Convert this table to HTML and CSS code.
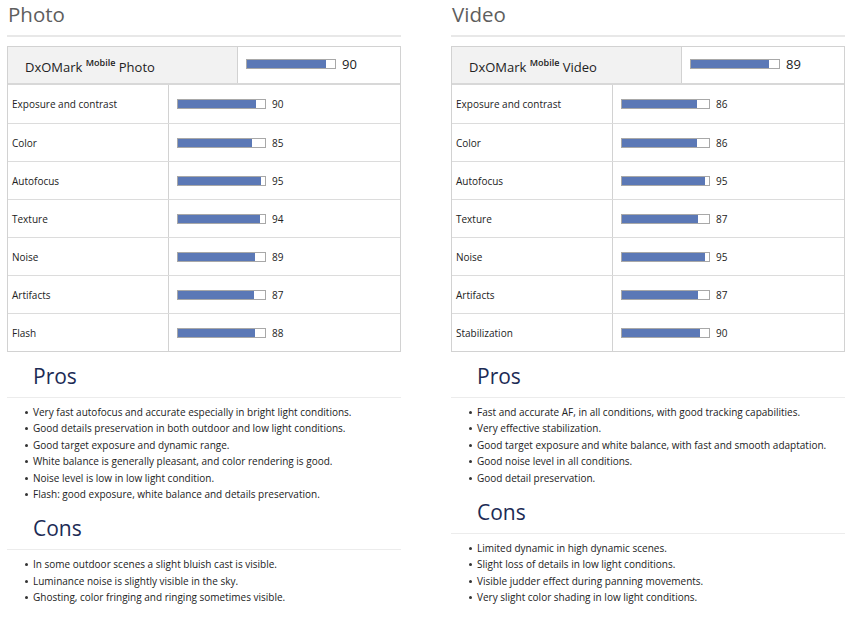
FILE: index.html
```html
<!DOCTYPE html>
<html>
<head>
<meta charset="utf-8">
<link rel="stylesheet" href="styles.css">
</head>
<body>
<div class="page">
  <section class="col">
    <h2 class="title">Photo</h2>
    <div class="score">
      <div class="score-head">
        <div class="head-label">DxOMark <sup>Mobile</sup> Photo</div>
        <div class="head-val"><span class="bar big"><span class="fill" style="width:90%"></span></span><span class="num big">90</span></div>
      </div>
      <div class="row"><div class="lab">Exposure and contrast</div><div class="val"><span class="bar"><span class="fill" style="width:90%"></span></span><span class="num">90</span></div></div>
      <div class="row"><div class="lab">Color</div><div class="val"><span class="bar"><span class="fill" style="width:85%"></span></span><span class="num">85</span></div></div>
      <div class="row"><div class="lab">Autofocus</div><div class="val"><span class="bar"><span class="fill" style="width:95%"></span></span><span class="num">95</span></div></div>
      <div class="row"><div class="lab">Texture</div><div class="val"><span class="bar"><span class="fill" style="width:94%"></span></span><span class="num">94</span></div></div>
      <div class="row"><div class="lab">Noise</div><div class="val"><span class="bar"><span class="fill" style="width:89%"></span></span><span class="num">89</span></div></div>
      <div class="row"><div class="lab">Artifacts</div><div class="val"><span class="bar"><span class="fill" style="width:87%"></span></span><span class="num">87</span></div></div>
      <div class="row"><div class="lab">Flash</div><div class="val"><span class="bar"><span class="fill" style="width:88%"></span></span><span class="num">88</span></div></div>
    </div>
    <h3 class="sub">Pros</h3>
    <ul class="list">
      <li>Very fast autofocus and accurate especially in bright light conditions.</li>
      <li>Good details preservation in both outdoor and low light conditions.</li>
      <li>Good target exposure and dynamic range.</li>
      <li>White balance is generally pleasant, and color rendering is good.</li>
      <li>Noise level is low in low light condition.</li>
      <li>Flash: good exposure, white balance and details preservation.</li>
    </ul>
    <h3 class="sub">Cons</h3>
    <ul class="list">
      <li>In some outdoor scenes a slight bluish cast is visible.</li>
      <li>Luminance noise is slightly visible in the sky.</li>
      <li>Ghosting, color fringing and ringing sometimes visible.</li>
    </ul>
  </section>
  <section class="col">
    <h2 class="title">Video</h2>
    <div class="score">
      <div class="score-head">
        <div class="head-label">DxOMark <sup>Mobile</sup> Video</div>
        <div class="head-val"><span class="bar big"><span class="fill" style="width:89%"></span></span><span class="num big">89</span></div>
      </div>
      <div class="row"><div class="lab">Exposure and contrast</div><div class="val"><span class="bar"><span class="fill" style="width:86%"></span></span><span class="num">86</span></div></div>
      <div class="row"><div class="lab">Color</div><div class="val"><span class="bar"><span class="fill" style="width:86%"></span></span><span class="num">86</span></div></div>
      <div class="row"><div class="lab">Autofocus</div><div class="val"><span class="bar"><span class="fill" style="width:95%"></span></span><span class="num">95</span></div></div>
      <div class="row"><div class="lab">Texture</div><div class="val"><span class="bar"><span class="fill" style="width:87%"></span></span><span class="num">87</span></div></div>
      <div class="row"><div class="lab">Noise</div><div class="val"><span class="bar"><span class="fill" style="width:95%"></span></span><span class="num">95</span></div></div>
      <div class="row"><div class="lab">Artifacts</div><div class="val"><span class="bar"><span class="fill" style="width:87%"></span></span><span class="num">87</span></div></div>
      <div class="row"><div class="lab">Stabilization</div><div class="val"><span class="bar"><span class="fill" style="width:90%"></span></span><span class="num">90</span></div></div>
    </div>
    <h3 class="sub">Pros</h3>
    <ul class="list">
      <li>Fast and accurate AF, in all conditions, with good tracking capabilities.</li>
      <li>Very effective stabilization.</li>
      <li>Good target exposure and white balance, with fast and smooth adaptation.</li>
      <li>Good noise level in all conditions.</li>
      <li>Good detail preservation.</li>
    </ul>
    <h3 class="sub">Cons</h3>
    <ul class="list">
      <li>Limited dynamic in high dynamic scenes.</li>
      <li>Slight loss of details in low light conditions.</li>
      <li>Visible judder effect during panning movements.</li>
      <li>Very slight color shading in low light conditions.</li>
    </ul>
  </section>
</div>
</body>
</html>
```

FILE: styles.css
```css
html, body {
  margin: 0;
  padding: 0;
  background: #fff;
}
body {
  font-family: "Open Sans", "DejaVu Sans", sans-serif;
  color: #222;
}
.page {
  display: grid;
  grid-template-columns: 394px 394px;
  column-gap: 50px;
  padding-left: 7px;
}
.col {
  display: flex;
  flex-direction: column;
}
.title {
  margin: 0;
  padding-left: 1px;
  font-size: 20.5px;
  font-weight: 400;
  line-height: 28px;
  color: #5e5e5e;
  border-bottom: 2px solid #e8e8e8;
  box-sizing: border-box;
  height: 37px;
}
.score {
  margin-top: 9px;
  border: 1px solid #d2d2d2;
}
.score-head {
  display: grid;
  grid-template-columns: 230px 1fr;
  height: 38px;
  box-sizing: border-box;
  border-bottom: 2px solid #d8d8d8;
}
.head-label {
  background: #f2f2f2;
  border-right: 1px solid #d2d2d2;
  padding: 11px 0 0 17px;
  font-size: 13px;
  color: #222;
}
.head-label sup {
  font-size: 9px;
  font-weight: 600;
  vertical-align: 6px;
  line-height: 0;
}
.head-val {
  display: flex;
  align-items: center;
  padding-left: 8px;
  padding-bottom: 2px;
}
.row {
  display: grid;
  grid-template-columns: 161px 1fr;
  height: 38px;
  border-top: 1px solid #dcdcdc;
  box-sizing: border-box;
}
.score-head + .row {
  border-top: none;
}
.lab {
  border-right: 1px solid #d2d2d2;
  display: flex;
  align-items: center;
  padding-left: 4px;
  font-size: 10px;
  color: #222;
}
.val {
  display: flex;
  align-items: center;
  padding-left: 8px;
}
.bar {
  display: block;
  width: 87px;
  height: 8px;
  border: 1px solid #a8a8a8;
  background: #fff;
  box-sizing: content-box;
}
.bar.big {
  width: 88px;
}
.fill {
  display: block;
  height: 100%;
  background: #5b78b6;
}
.num {
  margin-left: 6px;
  font-size: 10px;
  color: #222;
}
.num.big {
  font-size: 13px;
  margin-left: 6px;
}
.sub {
  margin: 0;
  height: 46px;
  padding: 11px 0 0 26px;
  box-sizing: border-box;
  font-size: 21px;
  font-weight: 400;
  line-height: 26px;
  color: #1c2b55;
  border-bottom: 1px solid #ececec;
}
.list {
  margin: 0;
  padding: 6px 0 2px 26px;
  list-style: none;
}
.list li {
  position: relative;
  font-size: 10px;
  line-height: 16.4px;
  color: #222;
}
.list li::before {
  content: "";
  position: absolute;
  left: -8px;
  top: 7px;
  width: 3px;
  height: 3px;
  border-radius: 50%;
  background: #333;
}
```
